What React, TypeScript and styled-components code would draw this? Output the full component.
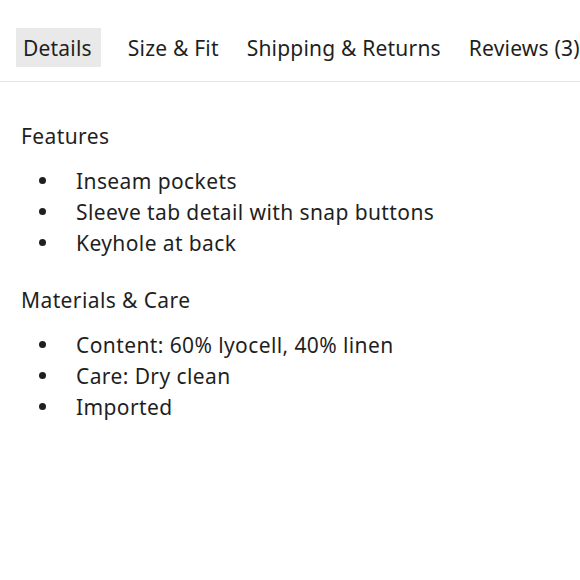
import React from "react";
import styled, { createGlobalStyle } from "styled-components";

const Global = createGlobalStyle`
  html, body { margin: 0; padding: 0; background: #ffffff; }
  body { font-family: "Noto Sans", "Liberation Sans", sans-serif; color: #1f1f1f; }
`;

const Page = styled.div`
  width: 580px;
  height: 580px;
  overflow: hidden;
  background: #fff;
`;

const TabBar = styled.nav`
  display: flex;
  align-items: center;
  gap: 14px;
  padding: 28px 0 14px 16px;
  border-bottom: 1px solid #e6e6e6;
  white-space: nowrap;
`;

const Tab = styled.div<{ $active?: boolean }>`
  height: 39px;
  display: flex;
  align-items: center;
  padding: ${(p) => (p.$active ? "0 9px 0 7px" : "0 7px")};
  font-size: 21px;
  letter-spacing: 0.2px;
  color: #1f1f1f;
  flex: none;
  background: ${(p) => (p.$active ? "#e9e9e9" : "transparent")};
  margin-right: ${(p) => (p.$active ? "6px" : "0")};
`;

const Content = styled.div`
  padding: 40px 0 0 21px;
`;

const Heading = styled.h3`
  margin: 0;
  font-size: 21px;
  letter-spacing: 0.4px;
  font-weight: 400;
  line-height: 28px;
`;

const List = styled.ul`
  list-style: none;
  margin: 15px 0 28px;
  padding: 0;
`;

const Item = styled.li`
  display: flex;
  align-items: center;
  height: 31px;
  font-size: 21px;
  letter-spacing: 0.4px;
  &::before {
    content: "";
    width: 7px;
    height: 7px;
    border-radius: 50%;
    background: #1f1f1f;
    margin: 0 30px 0 18px;
    flex: none;
  }
`;

const sections = [
  { title: "Features", items: ["Inseam pockets", "Sleeve tab detail with snap buttons", "Keyhole at back"] },
  { title: "Materials & Care", items: ["Content: 60% lyocell, 40% linen", "Care: Dry clean", "Imported"] },
];

export default function App() {
  return (
    <Page>
      <Global />
      <TabBar>
        <Tab $active>Details</Tab>
        <Tab>Size &amp; Fit</Tab>
        <Tab>Shipping &amp; Returns</Tab>
        <Tab>Reviews (3)</Tab>
      </TabBar>
      <Content>
        {sections.map((s) => (
          <section key={s.title}>
            <Heading>{s.title}</Heading>
            <List>
              {s.items.map((i) => (
                <Item key={i}>{i}</Item>
              ))}
            </List>
          </section>
        ))}
      </Content>
    </Page>
  );
}
